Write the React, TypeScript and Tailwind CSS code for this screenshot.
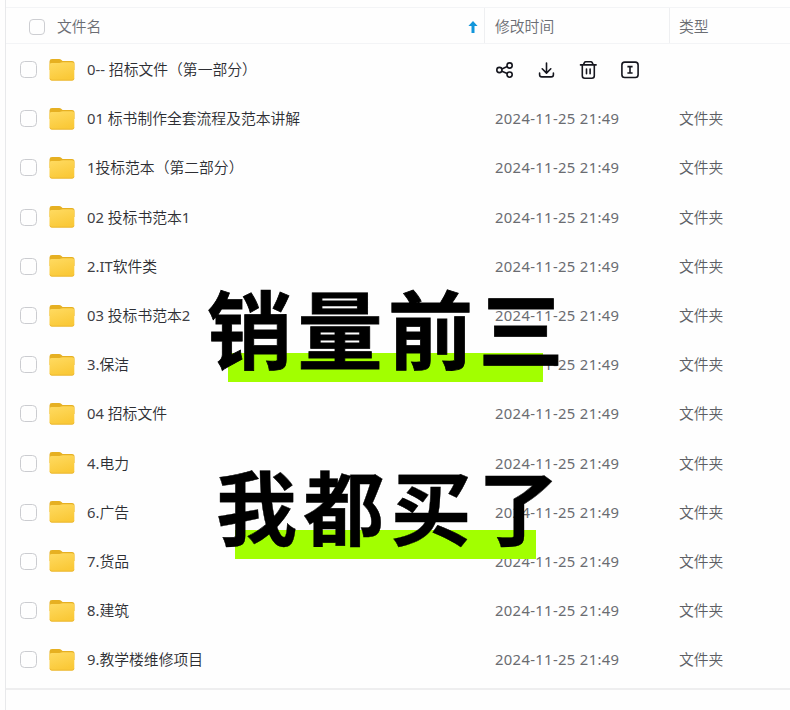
import React from "react";

const DATE = "2024-11-25 21:49";

const FILES = [
  "0-- 招标文件（第一部分）",
  "01 标书制作全套流程及范本讲解",
  "1投标范本（第二部分）",
  "02 投标书范本1",
  "2.IT软件类",
  "03 投标书范本2",
  "3.保洁",
  "04 招标文件",
  "4.电力",
  "6.广告",
  "7.货品",
  "8.建筑",
  "9.教学楼维修项目",
];

// Latin runs are set in the regular weight, Chinese ones a little lighter.
function FileName({ name }: { name: string }) {
  return (
    <span className="ml-3 whitespace-pre pb-px text-[#2d2e33]">
      {name.split(/([\x20-\x7e]+)/).map((part, i) =>
        i % 2 ? (
          <span key={i} className="font-normal text-[#3f4045]">
            {part}
          </span>
        ) : (
          part
        ),
      )}
    </span>
  );
}

function FolderIcon() {
  return (
    <svg className="ml-3 h-6 w-[26px] shrink-0" viewBox="0 0 26 24">
      <defs>
        <linearGradient id="folder" x1="0" y1="0" x2="0.4" y2="1">
          <stop offset="0" stopColor="#ffdb62" />
          <stop offset="1" stopColor="#fac938" />
        </linearGradient>
      </defs>
      <path d="M.5 3.4Q.5 1 3 1h7q1.5 0 2.5 1l1 .9H23q2.5 0 2.5 2.6V12H.5Z" fill="#e6b022" />
      <path d="M.5 7Q.5 5 2.5 5h8q1 0 1.8-.4.7-.4 1.7-.4h9q2.3 0 2.3 2.3v13.8q0 2.2-2.2 2.2H2.7Q.5 22.5 .5 20.3Z" fill="url(#folder)" />
      <path d="M1 20.7q.4 1.5 1.9 1.5h20.2q1.6 0 2-1.5" fill="none" stroke="#e8b22e" strokeWidth=".8" />
    </svg>
  );
}

function Actions() {
  return (
    <div className="flex items-center gap-[22px] text-[#15161e]">
      <svg className="h-5 w-5" viewBox="0 0 20 20" fill="none" stroke="currentColor" strokeWidth="1.6">
        <circle cx="4.4" cy="10" r="2.6" />
        <circle cx="14.6" cy="5.5" r="2.6" />
        <circle cx="14.6" cy="14.6" r="2.6" />
        <path d="m6.9 8.9 5.3-2.4M6.9 11.2l5.3 2.4" />
      </svg>
      <svg className="h-5 w-5" viewBox="0 0 20 20" fill="none" stroke="currentColor" strokeWidth="1.6" strokeLinecap="round" strokeLinejoin="round">
        <path d="M9.5 3v10M5.2 8.8l4.3 4.3 4.3-4.3M2.6 13v1.7q0 2.2 2.2 2.2h9.4q2.2 0 2.2-2.2V13" />
      </svg>
      <svg className="h-5 w-5" viewBox="0 0 20 20" fill="none" stroke="currentColor" strokeWidth="1.6" strokeLinecap="round" strokeLinejoin="round">
        <path d="M1.5 4.9h15.6M4.5 4.5l.9-1.9q.4-.8 1.3-.8h5.2q.9 0 1.3.8l.9 1.9M3.3 5.2v10.5q0 2.5 2.5 2.5h7q2.5 0 2.5-2.5V5.2M7.5 9v4.8M11.1 9v4.8" />
      </svg>
      <svg className="h-5 w-5" viewBox="0 0 20 20" fill="none" stroke="currentColor" strokeWidth="1.6">
        <rect x=".9" y="2.1" width="16.2" height="15.4" rx="2.8" />
        <path d="M6.4 6.6h5.2M6.4 13h5.2M9 6.6V13" />
      </svg>
    </div>
  );
}

function Highlight({ text, box, bar, type }: { text: string; box: string; bar: string; type: string }) {
  return (
    <div className={"absolute " + box}>
      <div className={"absolute bg-[#a2ff00] " + bar} />
      <div className={"relative whitespace-nowrap font-bold text-black " + type}>{text}</div>
    </div>
  );
}

export default function App() {
  return (
    <main className="relative h-[710px] w-[790px] overflow-hidden bg-[#fefefe] pl-[5px] font-['Noto_Sans','Noto_Sans_CJK_SC',sans-serif] text-[14.8px] font-[350]">
      <div className="h-full border-l border-[#e8e9eb] pt-[7px]">
        <header className="flex h-[37px] items-center border-y border-[#f3f4f6] text-[#6b6d73]">
          <div className="flex w-[478px] items-center pl-[23px]">
            <span className="mt-0.5 h-4 w-4 rounded-[4px] border border-[#cdced2]" />
            <span className="ml-3 pt-0.5">文件名</span>
            <svg className="ml-auto mr-[6px] mt-0.5 h-3 w-[10px]" viewBox="0 0 10 12">
              <path d="M5 0 9.6 5H6.5v7h-3V5H.4Z" fill="#1296db" />
            </svg>
          </div>
          <div className="flex h-full w-[185px] items-center border-l border-[#eeeff1] pl-[10px] pt-0.5">修改时间</div>
          <div className="flex h-full flex-1 items-center border-l border-[#eeeff1] pl-[9px] pt-0.5">类型</div>
        </header>
        <div className="flex h-[646px] flex-col border-b-2 border-[#eeeeef] pt-[1px]">
          {FILES.map((name, i) => (
            <div key={name} className="flex h-[49.2px] shrink-0 items-center">
              <div className="flex w-[489px] items-center pl-[14px]">
                <span className="h-[17px] w-[17px] rounded-[4.5px] border border-[#cbccd0]" />
                <FolderIcon />
                <FileName name={name} />
              </div>
              {i === 0 ? (
                <Actions />
              ) : (
                <>
                  <span className="w-[184px] pb-px font-normal tracking-[0.34px] text-[#6a6c71]">{DATE}</span>
                  <span className="pb-px text-[#5c5e64]">文件夹</span>
                </>
              )}
            </div>
          ))}
        </div>
      </div>
      <Highlight
        text="销量前三"
        box="left-[206px] top-[286px]"
        bar="left-[22px] top-[67px] h-[29px] w-[315px]"
        type="text-[85px] leading-[88px] tracking-[5.5px] left-px [-webkit-text-stroke:0.8px_black]"
      />
      <Highlight
        text="我都买了"
        box="left-[216px] top-[464px]"
        bar="left-[19px] top-[66px] h-[29px] w-[301px]"
        type="text-[81px] leading-[88px] tracking-[6.3px] [-webkit-text-stroke:0.4px_black]"
      />
    </main>
  );
}
